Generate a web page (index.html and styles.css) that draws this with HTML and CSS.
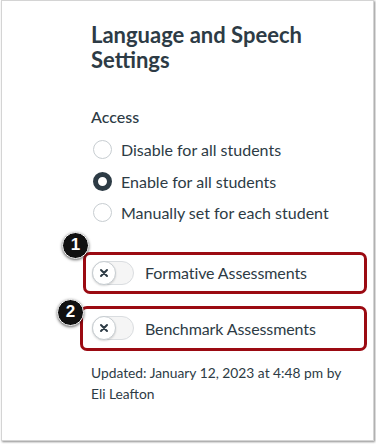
FILE: index.html
```html
<!DOCTYPE html>
<html>
<head>
<meta charset="utf-8">
<link rel="stylesheet" href="styles.css">
</head>
<body>
<div class="card">
  <div class="content">
    <h1 class="title">Language and Speech Settings</h1>
    <div class="section-label">Access</div>
    <div class="radios">
      <div class="radio-row"><span class="radio"></span><span>Disable for all students</span></div>
      <div class="radio-row"><span class="radio checked"></span><span>Enable for all students</span></div>
      <div class="radio-row"><span class="radio"></span><span>Manually set for each student</span></div>
    </div>
    <div class="toggle-row first">
      <span class="badge b1">1</span>
      <span class="toggle"><span class="knob"><svg class="x-icon" viewBox="0 0 10 10"><path d="M2 2L8 8M8 2L2 8"/></svg></span></span>
      <span class="toggle-label">Formative Assessments</span>
    </div>
    <div class="toggle-row second">
      <span class="badge b2">2</span>
      <span class="toggle"><span class="knob"><svg class="x-icon" viewBox="0 0 10 10"><path d="M2 2L8 8M8 2L2 8"/></svg></span></span>
      <span class="toggle-label">Benchmark Assessments</span>
    </div>
    <p class="updated">Updated: January 12, 2023 at 4:48 pm by Eli Leafton</p>
  </div>
</div>
</body>
</html>
```
FILE: styles.css
```css
html, body {
  margin: 0;
  padding: 0;
  background: #ffffff;
}
body {
  width: 376px;
  height: 444px;
  font-family: Lato, "Open Sans", sans-serif;
  color: #2d3b45;
}
.card {
  box-sizing: border-box;
  width: 373px;
  height: 441px;
  margin-left: 1px;
  border: 1px solid #d4d4d4;
  box-shadow: 1px 1px 2px rgba(0, 0, 0, 0.45);
  background: #fff;
}
.content {
  padding: 21px 0 0 89px;
}
.title {
  margin: 0;
  font-size: 22px;
  line-height: 25px;
  font-weight: 700;
  width: 240px;
}
.section-label {
  margin-top: 35px;
  font-size: 16px;
  line-height: 20px;
  font-weight: 500;
}
.radios {
  margin-top: 7px;
  display: flex;
  flex-direction: column;
}
.radio-row {
  display: flex;
  align-items: center;
  height: 31.5px;
  font-size: 16px;
}
.radio {
  box-sizing: border-box;
  width: 19px;
  height: 19px;
  border-radius: 50%;
  border: 1px solid #c7cdd1;
  margin-left: 2px;
  margin-right: 9px;
  background: #fff;
}
.radio.checked {
  border: 5px solid #2d3b45;
}
.toggle-row {
  position: relative;
  box-sizing: border-box;
  display: flex;
  align-items: center;
  width: 284px;
  border: 3px solid #9b0a12;
  border-radius: 7px;
  font-size: 16px;
}
.toggle-row.first {
  margin-top: 23px;
  margin-left: -8px;
  height: 42px;
  padding-left: 6px;
}
.toggle-row.second {
  margin-top: 12px;
  margin-left: -11px;
  width: 287px;
  height: 45px;
  padding-left: 9px;
}
.toggle {
  position: relative;
  box-sizing: border-box;
  width: 42px;
  height: 24px;
  border-radius: 12px;
  background: #f5f5f5;
  border: 1px solid #dadde0;
  margin-right: 11px;
}
.toggle-label {
  letter-spacing: -0.1px;
}
.knob {
  position: absolute;
  left: -1px;
  top: -1px;
  box-sizing: border-box;
  width: 24px;
  height: 24px;
  border-radius: 50%;
  background: #fff;
  border: 1px solid #c7cdd1;
  box-shadow: 0 1px 2px rgba(0, 0, 0, 0.15);
  display: flex;
  align-items: center;
  justify-content: center;
}
.x-icon {
  width: 10px;
  height: 10px;
  stroke: #2d3b45;
  stroke-width: 2;
  stroke-linecap: round;
  fill: none;
}
.badge {
  position: absolute;
  width: 27px;
  height: 27px;
  box-sizing: border-box;
  border-radius: 50%;
  background: #111;
  border: 1px solid #fff;
  box-shadow: 0 1px 3px rgba(0, 0, 0, 0.6);
  color: #fff;
  font-family: "Liberation Sans", Arial, sans-serif;
  font-weight: 700;
  font-size: 17px;
  display: flex;
  align-items: center;
  justify-content: center;
}
.b1 {
  left: -24px;
  top: -23px;
}
.b2 {
  left: -26px;
  top: -10px;
}
.updated {
  margin: 11px 0 0 0;
  font-size: 13.8px;
  line-height: 21px;
  width: 260px;
}
```
